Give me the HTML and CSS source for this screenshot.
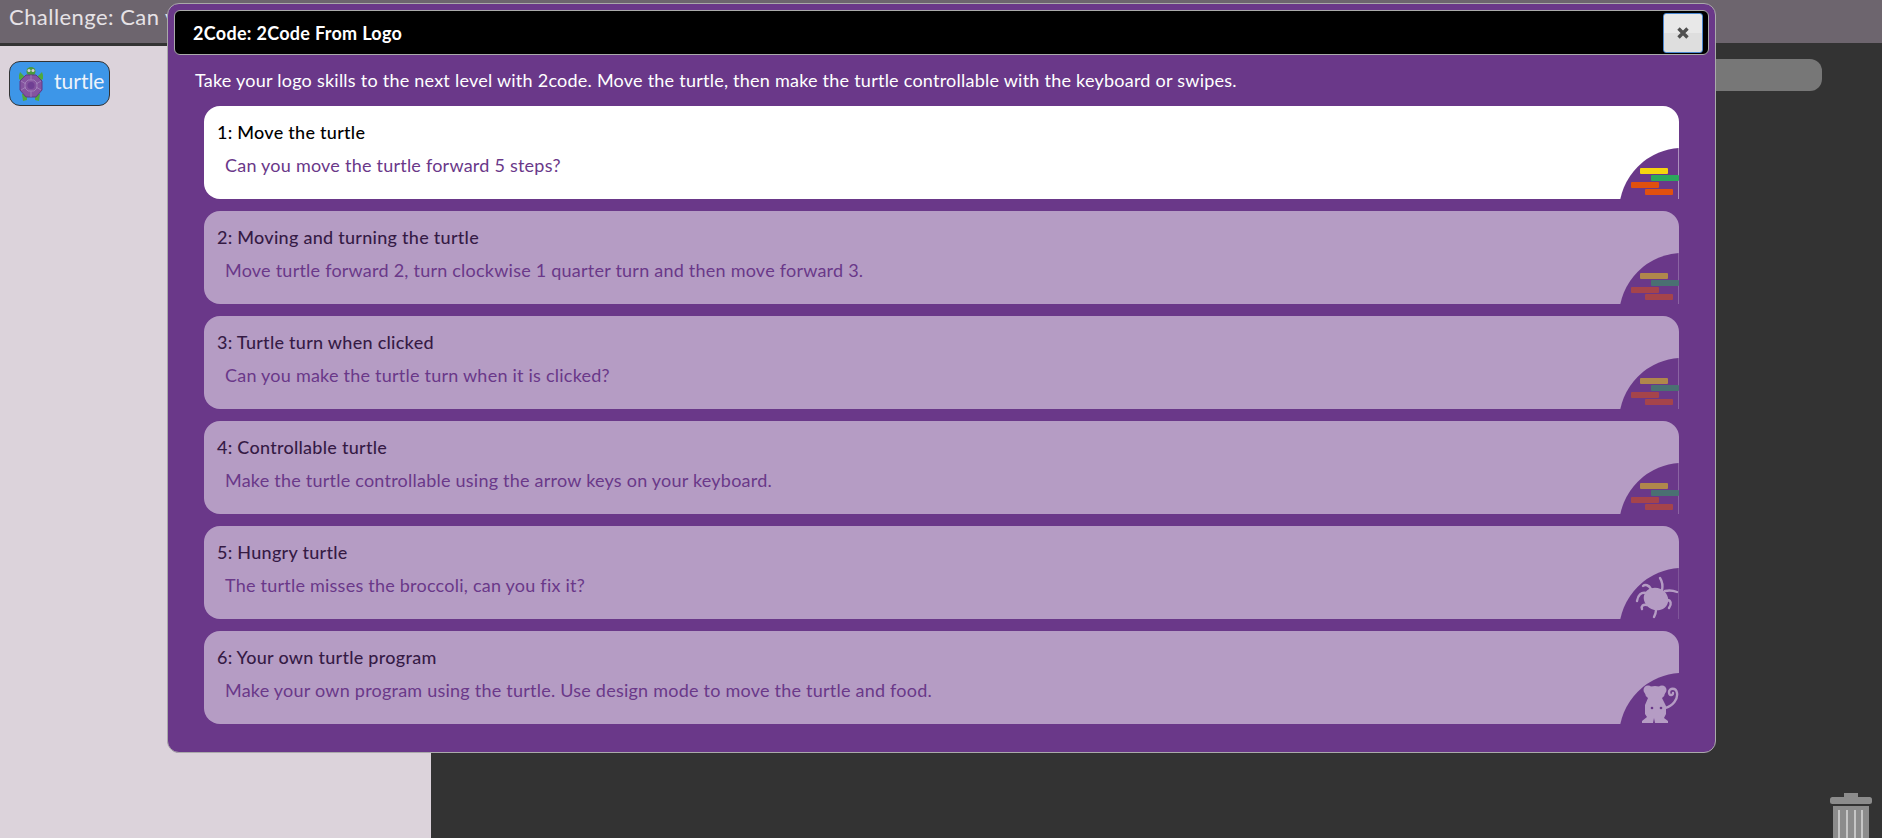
FILE: index.html
```html
<!DOCTYPE html>
<html lang="en">
<head>
<meta charset="utf-8">
<title>2Code From Logo</title>
<link rel="stylesheet" href="styles.css">
</head>
<body>
<div class="app">
  <header class="topbar">Challenge: Can you</header>
  <main class="workspace">
    <aside class="sprites">
      <div class="sprite-chip">
        <svg class="turtle" viewBox="0 0 26 36" width="26" height="36">
          <ellipse cx="13" cy="5.500" rx="4.500" ry="4.500" fill="#4a9a3c"/>
          <circle cx="11" cy="4.500" r="1.500" fill="#d8cfd8"/><circle cx="15" cy="4.500" r="1.500" fill="#d8cfd8"/>
          <path d="M1 9l1-3 5 5-3 4-3-2zM25 9l-1-3-5 5 3 4 3-2zM4 28h5l0 6-4 1zM22 28h-5l0 6 4 1z" fill="#4fa83c"/>
          <path d="M8 9h10l6 6v9l-6 7H8l-6-7v-9z" fill="#85539f" stroke="#5f3a86"/>
          <path d="M10 14h6l3 3v5l-3 3h-6l-3-3v-5z" fill="none" stroke="#a587bc" stroke-width=".8"/>
          <circle cx="13" cy="19.500" r="3.500" fill="#6f3f93"/>
          <path d="M13 9v5M13 25v6M3 15l5 3M23 15l-5 3M3 24l5-3M23 24l-5-3" stroke="#a587bc" stroke-width=".8"/>
        </svg>
        <span class="sprite-name">turtle</span>
      </div>
    </aside>
    <section class="stage">
      <div class="stage-bar"></div>
      <svg class="trash" viewBox="0 0 42 45" width="42" height="45">
        <rect x="14" y="0" width="14" height="4" fill="#8c8c8c"/>
        <rect x="0" y="4" width="42" height="7" rx="2.500" fill="#8c8c8c"/>
        <rect x="3" y="13" width="36" height="32" fill="#8c8c8c"/>
        <path d="M9 17v28M17 17v28M25 17v28M32 17v28" stroke="#c6c6c6" stroke-width="2"/>
      </svg>
    </section>
  </main>
</div>

<div class="modal">
  <div class="modal-title">
    <span>2Code: 2Code From Logo</span>
    <button class="modal-close" aria-label="Close">
      <svg viewBox="0 0 14 14" width="14" height="14"><path d="M2.500 2.500l9 9M11.500 2.500l-9 9" stroke="#505050" stroke-width="3.400"/></svg>
    </button>
  </div>
  <p class="modal-intro">Take your logo skills to the next level with 2code. Move the turtle, then make the turtle controllable with the keyboard or swipes.</p>
  <ul class="lessons">
    <li class="lesson lesson-active">
      <h3>1: Move the turtle</h3>
      <p>Can you move the turtle forward 5 steps?</p>
      <svg class="badge" viewBox="0 0 60 51" width="60" height="51"><circle cx="64" cy="64" r="64" fill="#6a3889"/><path d="M59.500 0v51" stroke="#fff" stroke-opacity=".45"/><rect x="21" y="20" width="28" height="6" rx="1" fill="#f6d50e"/><rect x="32" y="27" width="28" height="6" rx="1" fill="#2ca85c"/><rect x="12" y="34" width="28" height="6" rx="1" fill="#e1500f"/><rect x="26" y="41" width="28" height="6" rx="1" fill="#e1500f"/></svg>
    </li>
    <li class="lesson">
      <h3>2: Moving and turning the turtle</h3>
      <p>Move turtle forward 2, turn clockwise 1 quarter turn and then move forward 3.</p>
      <svg class="badge" viewBox="0 0 60 51" width="60" height="51"><circle cx="64" cy="64" r="64" fill="#6a3889"/><path d="M59.500 0v51" stroke="#fff" stroke-opacity=".45"/><rect x="21" y="20" width="28" height="6" rx="1" fill="#f6d50e"/><rect x="32" y="27" width="28" height="6" rx="1" fill="#2ca85c"/><rect x="12" y="34" width="28" height="6" rx="1" fill="#e1500f"/><rect x="26" y="41" width="28" height="6" rx="1" fill="#e1500f"/></svg>
    </li>
    <li class="lesson">
      <h3>3: Turtle turn when clicked</h3>
      <p>Can you make the turtle turn when it is clicked?</p>
      <svg class="badge" viewBox="0 0 60 51" width="60" height="51"><circle cx="64" cy="64" r="64" fill="#6a3889"/><path d="M59.500 0v51" stroke="#fff" stroke-opacity=".45"/><rect x="21" y="20" width="28" height="6" rx="1" fill="#f6d50e"/><rect x="32" y="27" width="28" height="6" rx="1" fill="#2ca85c"/><rect x="12" y="34" width="28" height="6" rx="1" fill="#e1500f"/><rect x="26" y="41" width="28" height="6" rx="1" fill="#e1500f"/></svg>
    </li>
    <li class="lesson">
      <h3>4: Controllable turtle</h3>
      <p>Make the turtle controllable using the arrow keys on your keyboard.</p>
      <svg class="badge" viewBox="0 0 60 51" width="60" height="51"><circle cx="64" cy="64" r="64" fill="#6a3889"/><path d="M59.500 0v51" stroke="#fff" stroke-opacity=".45"/><rect x="21" y="20" width="28" height="6" rx="1" fill="#f6d50e"/><rect x="32" y="27" width="28" height="6" rx="1" fill="#2ca85c"/><rect x="12" y="34" width="28" height="6" rx="1" fill="#e1500f"/><rect x="26" y="41" width="28" height="6" rx="1" fill="#e1500f"/></svg>
    </li>
    <li class="lesson">
      <h3>5: Hungry turtle</h3>
      <p>The turtle misses the broccoli, can you fix it?</p>
      <svg class="badge" viewBox="0 0 60 51" width="60" height="51"><circle cx="64" cy="64" r="64" fill="#6a3889"/><path d="M59.500 0v51" stroke="#fff" stroke-opacity=".3"/>
        <ellipse cx="37" cy="31" rx="12.500" ry="11" transform="rotate(25 37 31)" fill="#fff"/>
        <path d="M43 23C44 18 43 13 41 10M32 21C30 17 26 16 24 18M27 25C22 24 19 27 18 33M28 37C24 36 22 38 23 41M37 42C37 45 36 47 35 49M46 23C50 22 53 22 58 24M48 32C52 32 53 36 50 40" fill="none" stroke="#fff" stroke-width="2.400" stroke-linecap="round"/></svg>
    </li>
    <li class="lesson">
      <h3>6: Your own turtle program</h3>
      <p>Make your own program using the turtle. Use design mode to move the turtle and food.</p>
      <svg class="badge" viewBox="0 0 60 51" width="60" height="51"><circle cx="64" cy="64" r="64" fill="#6a3889"/>
        <circle cx="29" cy="17" r="4.500" fill="#fff"/><circle cx="43" cy="17" r="4.500" fill="#fff"/><ellipse cx="36" cy="20" rx="10" ry="7" fill="#fff"/>
        <path d="M29 25h14l4 8v8l-2 4 4 3v2H36l-1-5-1 5H23v-2l5-4-2-3v-9z" fill="#fff"/>
        <path d="M46 35C54 33 59 26 58 20C57 14 50 15 50 19C50 23 54 23 54 20" fill="none" stroke="#fff" stroke-width="2.400" stroke-linecap="round"/>
        <circle cx="33" cy="35" r="1.300" fill="#6a3889"/><circle cx="42" cy="35" r="1.300" fill="#6a3889"/></svg>
    </li>
  </ul>
</div>
</body>
</html>
```

FILE: styles.css
```css
* { box-sizing: border-box; }
html, body { margin: 0; height: 100%; overflow: hidden; }
body { font-family: "Lato", "Noto Sans", sans-serif; background: #333; }

.app { display: flex; flex-direction: column; height: 838px; }
.topbar {
  height: 46px;
  padding: 4px 9px 0;
  background: #6d656e;
  border-bottom: 3px solid #333;
  color: #e6e2e6;
  font-size: 22px;
  line-height: 26px;
  letter-spacing: .45px;
}
.workspace { flex: 1; display: flex; }
.sprites { width: 431px; padding: 15px 9px; background: #dcd3db; }
.sprite-chip {
  display: flex;
  align-items: center;
  gap: 10px;
  width: 101px;
  height: 45px;
  padding-left: 8px;
  background: #3d96e8;
  border: 1px solid #333;
  border-radius: 11px;
  color: #eef2fa;
  font-size: 21px;
}
.sprite-name { line-height: 24px; margin-bottom: 6px; }
.turtle { flex: none; }
.stage { flex: 1; position: relative; padding-top: 13px; padding-right: 60px; }
.stage-bar { height: 32px; background: #777; border-radius: 12px; }
.trash { position: absolute; right: 10px; bottom: 0; }

.modal {
  position: absolute;
  left: 167px;
  top: 3px;
  width: 1549px;
  height: 750px;
  padding: 6px;
  background: #6a3889;
  border: 1px solid #aaa;
  border-radius: 12px;
  display: flex;
  flex-direction: column;
}
.modal-title {
  height: 45px;
  flex: none;
  display: flex;
  align-items: center;
  justify-content: space-between;
  padding: 0 5px 0 18px;
  background: #000;
  border: 1px solid #aaa;
  border-radius: 6px;
  color: #fff;
  font-size: 18px;
  font-weight: 700;
  letter-spacing: .3px;
}
.modal-close {
  width: 40px;
  height: 40px;
  padding: 0;
  display: flex;
  align-items: center;
  justify-content: center;
  background: linear-gradient(#e8e8e8 50%, #dedede 50%);
  border: 1.500px solid #4a86d0;
  border-radius: 3px;
}
.modal-intro {
  margin: 14px 0 15px;
  padding-left: 21px;
  color: #fff;
  font-size: 18px;
  line-height: 22px;
  letter-spacing: .24px;
}
.lessons {
  list-style: none;
  margin: 0;
  padding: 0 30px;
  display: flex;
  flex-direction: column;
  gap: 12px;
}
.lesson {
  position: relative;
  height: 93px;
  padding: 14px 13px 0;
  background: #fff;
  border-radius: 16px 16px 0 16px;
  opacity: .5;
  overflow: hidden;
}
.lesson-active { opacity: 1; }
.lesson h3 {
  margin: 0;
  color: #000;
  font-size: 18px;
  line-height: 24px;
  font-weight: 500;
  letter-spacing: .27px;
}
.lesson p {
  margin: 10px 0 0;
  padding-left: 8px;
  color: #6a3889;
  font-size: 18px;
  line-height: 22px;
  letter-spacing: .23px;
}
.badge { position: absolute; right: 0; bottom: 0; }
```
